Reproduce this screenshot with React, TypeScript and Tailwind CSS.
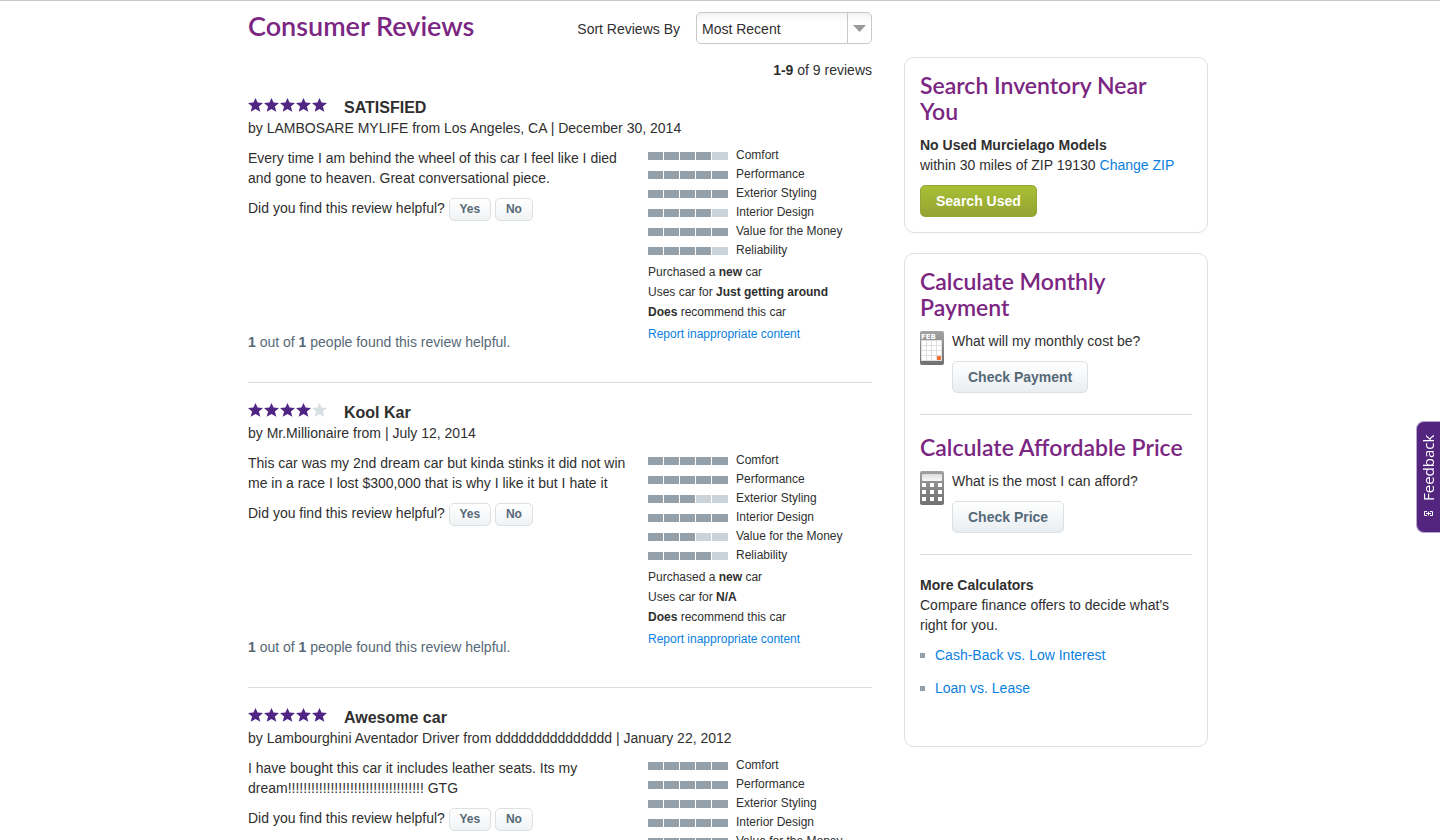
import type { ReactNode } from "react";

interface Review {
  title: string;
  stars: number;
  byline: string;
  body: string;
  ratings: number[];
  usage: string;
}

const CATEGORIES = [
  "Comfort",
  "Performance",
  "Exterior Styling",
  "Interior Design",
  "Value for the Money",
  "Reliability",
];

const REVIEWS: Review[] = [
  {
    title: "SATISFIED",
    stars: 5,
    byline: "by LAMBOSARE MYLIFE from Los Angeles, CA | December 30, 2014",
    body: "Every time I am behind the wheel of this car I feel like I died and gone to heaven. Great conversational piece.",
    ratings: [4, 5, 5, 4, 5, 4],
    usage: "Just getting around",
  },
  {
    title: "Kool Kar",
    stars: 4,
    byline: "by Mr.Millionaire from | July 12, 2014",
    body: "This car was my 2nd dream car but kinda stinks it did not win me in a race I lost $300,000 that is why I like it but I hate it",
    ratings: [5, 5, 3, 5, 3, 4],
    usage: "N/A",
  },
  {
    title: "Awesome car",
    stars: 5,
    byline: "by Lambourghini Aventador Driver from ddddddddddddddd | January 22, 2012",
    body: "I have bought this car it includes leather seats. Its my dream!!!!!!!!!!!!!!!!!!!!!!!!!!!!!!!!!!! GTG",
    ratings: [5, 5, 5, 5, 5, 5],
    usage: "Having fun",
  },
];

function Stars({ count }: { count: number }) {
  return (
    <div className="flex w-24 shrink-0" role="img" aria-label={`${count} out of 5 stars`}>
      {[1, 2, 3, 4, 5].map((n) => (
        <svg key={n} viewBox="0 1 16 16" className={`h-4 w-4 ${n <= count ? "fill-[#4f2683]" : "fill-[#d6dfe2]"}`}>
          <path d="M7.500 1l2.100 4.600 5.400.5-4.100 3.500 1.400 5.200-4.800-2.900-4.800 2.900 1.400-5.200L0 6.100l5.400-.5z" />
        </svg>
      ))}
    </div>
  );
}

function RatingBar({ value }: { value: number }) {
  return (
    <div className="mt-1.5 flex h-2 w-20 gap-px">
      {[1, 2, 3, 4, 5].map((n) => (
        <span key={n} className={`h-2 w-[15px] last:w-4 ${n <= value ? "bg-[#95a1aa]" : "bg-[#c9d3d9]"}`} />
      ))}
    </div>
  );
}

function SmallButton({ children }: { children: ReactNode }) {
  return (
    <button
      type="button"
      className="h-[23px] rounded-[5px] border border-[#dddfe1] bg-linear-to-b from-white to-[#f0f3f5] px-[9px] pb-0.5 text-xs font-bold text-[#566977] first-of-type:w-[42px] last-of-type:w-[38px]"
    >
      {children}
    </button>
  );
}

function CheckButton({ children }: { children: ReactNode }) {
  return (
    <button
      type="button"
      className="mt-2.5 block h-8 rounded-[5px] border border-[#dddfe1] bg-linear-to-b from-white to-[#eaeef1] px-[15px] font-bold text-[#566977]"
    >
      {children}
    </button>
  );
}

function ReviewItem({ review }: { review: Review }) {
  return (
    <article className="mb-5 border-b border-[#dcdcdc] pb-[30px]">
      <div className="flex">
        <Stars count={review.stars} />
        <h2 className="text-base leading-5 font-bold">{review.title}</h2>
      </div>
      <p>{review.byline}</p>
      <div className="flex">
        <div className="flex flex-1 flex-col pt-2.5">
          <p className="pr-1.5">{review.body}</p>
          <div className="mt-2.5 flex items-start gap-1">
            <span>Did you find this review helpful?</span>
            <SmallButton>Yes</SmallButton>
            <SmallButton>No</SmallButton>
          </div>
          <p className="mt-auto text-[#566977]">
            <b>1</b> out of <b>1</b> people found this review helpful.
          </p>
        </div>
        <div className="w-56 pt-2 pb-2 text-xs">
          <ul>
            {CATEGORIES.map((name, i) => (
              <li key={name} className="flex h-[19px] items-start gap-2">
                <RatingBar value={review.ratings[i]} />
                <span className="leading-[18px]">{name}</span>
              </li>
            ))}
          </ul>
          <div className="mt-0.5 leading-5">
            <p>Purchased a <b>new</b> car</p>
            <p>Uses car for <b>{review.usage}</b></p>
            <p><b>Does</b> recommend this car</p>
            <a href="#report" className="mt-0.5 block text-[#0b7fe0]">Report inappropriate content</a>
          </div>
        </div>
      </div>
    </article>
  );
}

function CalendarIcon() {
  return (
    <svg viewBox="0 0 24 34" className="h-[34px] w-6 shrink-0" aria-hidden="true">
      <defs>
        <linearGradient id="cal" x1="0" y1="0" x2="0" y2="1">
          <stop offset="0" stopColor="#a3a3a3" />
          <stop offset="1" stopColor="#707070" />
        </linearGradient>
      </defs>
      <rect width="24" height="34" rx="2" fill="url(#cal)" />
      <text x="1" y="8" fontSize="7" fontWeight="bold" fill="#fff" fontFamily="DejaVu Sans, sans-serif">FEB</text>
      <path d="M1 9h21v21H1z" fill="#dedede" />
      {[10, 15, 20, 25].map((y) =>
        [2, 7, 12, 17].map((x) => (
          <rect key={`${x}-${y}`} x={x} y={y} width="4" height="4" fill={x === 17 && y === 25 ? "#f37435" : "#fff"} />
        ))
      )}
    </svg>
  );
}

function CalculatorIcon() {
  return (
    <svg viewBox="0 0 24 34" className="h-[34px] w-6 shrink-0" aria-hidden="true">
      <defs>
        <linearGradient id="calc" x1="0" y1="0" x2="0" y2="1">
          <stop offset="0" stopColor="#a0a0a0" />
          <stop offset="1" stopColor="#707070" />
        </linearGradient>
        <linearGradient id="display" x1="0" y1="0" x2="0" y2="1">
          <stop offset="0" stopColor="#dcdcdc" />
          <stop offset="1" stopColor="#f8f8f8" />
        </linearGradient>
      </defs>
      <rect width="24" height="34" rx="2" fill="url(#calc)" />
      <rect x="2" y="3" width="20" height="7" rx="1" fill="url(#display)" />
      {[12, 19, 26].map((y) =>
        [2, 10, 18].map((x) => <rect key={`${x}-${y}`} x={x} y={y} width="4" height="4" fill="#fff" />)
      )}
    </svg>
  );
}

function CardTitle({ children }: { children: ReactNode }) {
  return <h2 className="-mt-px mb-[11px] pr-1 font-['Lato',sans-serif] text-[23px] leading-[26px] font-semibold text-[#7b2682]">{children}</h2>;
}

export default function App() {
  return (
    <div className="border-t border-[#c8c8c8] bg-white font-['Liberation_Sans',Arial,sans-serif] text-sm leading-5 text-[#2f2f2f]">
      <div className="mx-auto flex max-w-[976px] items-start gap-8 pl-4">
        <main className="min-w-0 flex-1 pt-[11px]">
          <div className="flex items-start">
            <h1 className="mr-auto font-['Lato',sans-serif] text-[27px] leading-7 font-semibold text-[#7b2682]">Consumer Reviews</h1>
            <label htmlFor="sort" className="mr-4 leading-[34px]">Sort Reviews By</label>
            <div className="relative w-44">
              <select
                id="sort"
                className="block h-8 w-full appearance-none rounded-[5px] border border-[#c8c8c8] bg-linear-to-b from-[#f3f3f3] to-white to-30% pt-0.5 pl-[5px]"
              >
                <option>Most Recent</option>
              </select>
              <span className="pointer-events-none absolute inset-y-px right-px flex w-6 items-center justify-center border-l border-[#c8c8c8]">
                <svg viewBox="0 0 13 7" className="h-[7px] w-[13px] fill-[#999]">
                  <path d="M0 0h13L6.500 7z" />
                </svg>
              </span>
            </div>
          </div>
          <p className="mt-3.5 mb-[18px] text-right"><b>1-9</b> of 9 reviews</p>
          {REVIEWS.map((review) => (
            <ReviewItem key={review.title} review={review} />
          ))}
        </main>

        {/* Sidebar */}
        <aside className="w-[304px] shrink-0 pt-14">
          <section className="rounded-[10px] border border-[#dfdfdf] p-[15px]">
            <CardTitle>Search Inventory Near You</CardTitle>
            <p className="font-bold">No Used Murcielago Models</p>
            <p>within 30 miles of ZIP 19130 <a href="#zip" className="text-[#0b7fe0]">Change ZIP</a></p>
            <button
              type="button"
              className="mt-2.5 block h-8 rounded-[5px] border border-[#93a636] bg-linear-to-b from-[#a9bf35] to-[#94a432] px-[15px] font-bold text-white"
            >
              Search Used
            </button>
          </section>

          <section className="mt-5 rounded-[10px] border border-[#dfdfdf] px-[15px] pt-[15px] pb-12">
            <CardTitle>Calculate Monthly Payment</CardTitle>
            <div className="flex gap-2">
              <CalendarIcon />
              <div>
                <p>What will my monthly cost be?</p>
                <CheckButton>Check Payment</CheckButton>
              </div>
            </div>
            <hr className="mt-[21px] mb-5 border-[#dcdcdc]" />
            <CardTitle>Calculate Affordable Price</CardTitle>
            <div className="flex gap-2">
              <CalculatorIcon />
              <div>
                <p>What is the most I can afford?</p>
                <CheckButton>Check Price</CheckButton>
              </div>
            </div>
            <hr className="mt-[21px] mb-5 border-[#dcdcdc]" />
            <p className="font-bold">More Calculators</p>
            <p>Compare finance offers to decide what's right for you.</p>
            <ul className="mt-2.5 space-y-[13px] text-[#0b7fe0]">
              <li className="flex items-center gap-2.5">
                <span className="h-[5px] w-[5px] bg-[#95a1aa]" />
                <a href="#cash-back">Cash-Back vs. Low Interest</a>
              </li>
              <li className="flex items-center gap-2.5">
                <span className="h-[5px] w-[5px] bg-[#95a1aa]" />
                <a href="#lease">Loan vs. Lease</a>
              </li>
            </ul>
          </section>
        </aside>
      </div>

      {/* Feedback tab */}
      <button
        type="button"
        className="fixed top-[421px] right-0 flex h-[112px] w-6 rotate-180 items-center gap-2.5 rounded-r-lg border border-l-0 border-[#b9a8cc] bg-[#54257f] pt-4 font-['Open_Sans',sans-serif] text-[15px] leading-6 text-white [writing-mode:vertical-rl]"
      >
        <svg viewBox="0 0 9 5" className="h-[5px] w-[9px]" fill="none" stroke="#fff">
          <path d="M3 .5H.5v4H3M6 .5h2.500v4H6M2 2.500h5M4.500.5v4" />
        </svg>
        Feedback
      </button>
    </div>
  );
}
